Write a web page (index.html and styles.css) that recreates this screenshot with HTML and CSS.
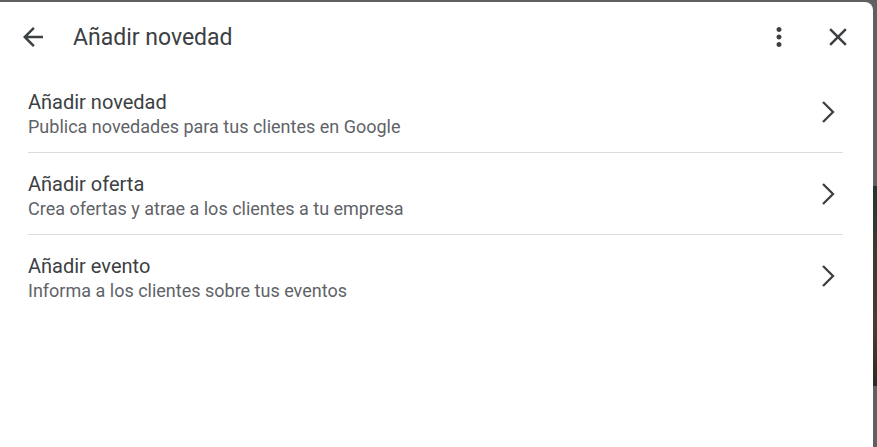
FILE: index.html
```html
<!DOCTYPE html>
<html lang="es">
<head>
<meta charset="utf-8">
<title>Añadir novedad</title>
<link rel="stylesheet" href="styles.css">
</head>
<body>
<div class="dialog">
  <header class="header">
    <button class="icon-btn back" aria-label="Atrás">
      <svg width="30" height="30" viewBox="0 0 24 24"><path d="M20 11H7.83l5.59-5.59L12 4l-8 8 8 8 1.41-1.41L7.830 13H20v-2z" fill="#3c4043"/></svg>
    </button>
    <h1 class="title">Añadir novedad</h1>
    <div class="actions">
      <button class="icon-btn" aria-label="Más">
        <svg width="30" height="30" viewBox="0 0 24 24"><path d="M12 8c1.1 0 2-.9 2-2s-.9-2-2-2-2 .9-2 2 .9 2 2 2zm0 2c-1.1 0-2 .9-2 2s.9 2 2 2 2-.9 2-2-.9-2-2-2zm0 6c-1.1 0-2 .9-2 2s.9 2 2 2 2-.9 2-2-.9-2-2-2z" fill="#3c4043"/></svg>
      </button>
      <button class="icon-btn" aria-label="Cerrar">
        <svg width="30" height="30" viewBox="0 0 24 24"><path d="M19 6.41L17.59 5 12 10.59 6.41 5 5 6.41 10.59 12 5 17.59 6.41 19 12 13.41 17.59 19 19 17.59 13.41 12z" fill="#3c4043"/></svg>
      </button>
    </div>
  </header>
  <ul class="list">
    <li class="item">
      <div class="text">
        <div class="item-title">Añadir novedad</div>
        <div class="item-sub">Publica novedades para tus clientes en Google</div>
      </div>
      <svg class="chev" width="24" height="24" viewBox="0 0 24 24"><polyline points="7,2 17,12 7,22" fill="none" stroke="#3c4043" stroke-width="2.3"/></svg>
    </li>
    <li class="item">
      <div class="text">
        <div class="item-title">Añadir oferta</div>
        <div class="item-sub">Crea ofertas y atrae a los clientes a tu empresa</div>
      </div>
      <svg class="chev" width="24" height="24" viewBox="0 0 24 24"><polyline points="7,2 17,12 7,22" fill="none" stroke="#3c4043" stroke-width="2.3"/></svg>
    </li>
    <li class="item">
      <div class="text">
        <div class="item-title">Añadir evento</div>
        <div class="item-sub">Informa a los clientes sobre tus eventos</div>
      </div>
      <svg class="chev" width="24" height="24" viewBox="0 0 24 24"><polyline points="7,2 17,12 7,22" fill="none" stroke="#3c4043" stroke-width="2.3"/></svg>
    </li>
  </ul>
</div>
</body>
</html>
```
FILE: styles.css
```css
html, body {
  margin: 0;
  padding: 0;
  height: 100%;
}
body {
  background: linear-gradient(to bottom, #606060 0, #606060 186px, #22372f 186px, #3a3a33 250px, #4a3b32 330px, #2b2a26 386px, #606060 386px);
  font-family: Roboto, "Noto Sans", Arial, sans-serif;
  overflow: hidden;
}
.dialog {
  width: 873px;
  height: 445px;
  margin-top: 2px;
  background: #fff;
  border-radius: 0 8px 0 0;
  box-sizing: border-box;
}
.header {
  display: flex;
  align-items: center;
  height: 69px;
  padding: 0 20px 0 18px;
}
.icon-btn {
  border: 0;
  background: none;
  padding: 0;
  width: 30px;
  height: 30px;
  display: flex;
  align-items: center;
  justify-content: center;
  cursor: pointer;
}
.title {
  margin: 0 0 0 25px;
  padding-top: 2px;
  font-size: 23px;
  font-weight: 400;
  color: #3c4043;
  flex: 1;
}
.actions {
  display: flex;
  gap: 29px;
}
.list {
  list-style: none;
  margin: 0;
  padding: 0 30px 0 28px;
}
.item {
  display: flex;
  align-items: center;
  height: 81px;
  border-bottom: 1px solid #dadce0;
}
.item:last-child {
  border-bottom: 0;
}
.text {
  flex: 1;
  padding: 18px 0 13px;
}
.item-title {
  font-size: 20px;
  color: #3c4043;
  line-height: 26px;
}
.item-sub {
  font-size: 18px;
  color: #5f6368;
  line-height: 24px;
}
.chev {
  margin-right: 3px;
}
```
